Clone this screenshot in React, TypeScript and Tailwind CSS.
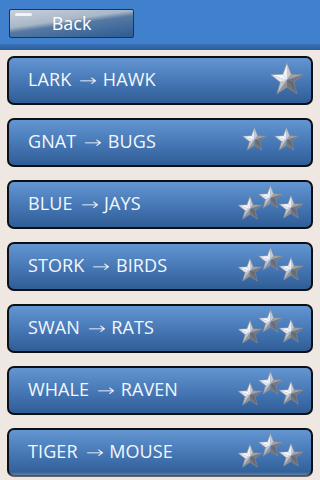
import type { FC } from "react";

type Star = { x: number; y: number; r: number };

const three: Star[] = [
  { x: 17, y: 27, r: 12.5 },
  { x: 37.5, y: 16, r: 12.5 },
  { x: 58, y: 26, r: 12.5 },
];

const rows: { from: string; to: string; stars: Star[] }[] = [
  { from: "LARK", to: "HAWK", stars: [{ x: 54, y: 22, r: 17 }] },
  {
    from: "GNAT",
    to: "BUGS",
    stars: [
      { x: 21.5, y: 20, r: 12.5 },
      { x: 53.5, y: 20, r: 12.5 },
    ],
  },
  { from: "BLUE", to: "JAYS", stars: three },
  { from: "STORK", to: "BIRDS", stars: three },
  { from: "SWAN", to: "RATS", stars: three },
  { from: "WHALE", to: "RAVEN", stars: three },
  { from: "TIGER", to: "MOUSE", stars: three },
];

const pt = (cx: number, cy: number, r: number, deg: number) => {
  const a = (deg * Math.PI) / 180;
  return `${(cx + r * Math.cos(a)).toFixed(2)},${(cy + r * Math.sin(a)).toFixed(2)}`;
};

const shade = (deg: number) => {
  // light from the upper left
  const d = ((deg + 140) * Math.PI) / 180;
  const t = 0.5 + 0.5 * Math.cos(d);
  const v = Math.round(105 + t * 145);
  return `rgb(${v},${v},${Math.min(255, v + 4)})`;
};

const SilverStar: FC<Star> = ({ x, y, r }) => {
  const inner = r * 0.42;
  const facets = [];
  for (let i = 0; i < 5; i++) {
    const a = -90 + i * 72;
    const o = pt(x, y, r, a);
    const l = pt(x, y, inner, a - 36);
    const rr = pt(x, y, inner, a + 36);
    const c = `${x},${y}`;
    facets.push(
      <polygon key={`${i}a`} points={`${c} ${l} ${o}`} fill={shade(a - 20)} />,
      <polygon key={`${i}b`} points={`${c} ${o} ${rr}`} fill={shade(a + 20)} />
    );
  }
  const outline = [];
  for (let i = 0; i < 10; i++) {
    outline.push(pt(x, y, i % 2 === 0 ? r : inner, -90 + i * 36));
  }
  return (
    <g>
      {facets}
      <polygon points={outline.join(" ")} fill="none" stroke="#8a8f96" strokeWidth={0.6} />
    </g>
  );
};

const Row: FC<{ from: string; to: string; stars: Star[] }> = ({ from, to, stars }) => (
  <div className="flex h-[49px] items-center justify-between rounded-[7px] border-2 border-[#0c0f14] bg-[linear-gradient(180deg,#6395d1_0%,#4a7cba_45%,#2f5d96_100%)] pr-[2px] pl-[19px]">
    <span className="mb-[3px] flex items-center text-[18px] leading-none tracking-[0.1px] text-[#f4f7fb]">
      <span>{from}</span>
      <span className="mt-[4px] mr-[8px] ml-[10px] inline-block scale-x-[1.35] font-['DejaVu_Sans'] text-[16px] font-extralight">
        →
      </span>
      <span>{to}</span>
    </span>
    <svg width="76" height="45" viewBox="0 0 76 45">
      {stars.map((s, i) => (
        <SilverStar key={i} {...s} />
      ))}
    </svg>
  </div>
);

export default function App() {
  return (
    <div
      className="relative h-[480px] w-[320px] overflow-hidden bg-[#efe8e2]"
      style={{ fontFamily: '"Open Sans", "Noto Sans", sans-serif' }}
    >
      <div className="h-[44px] bg-[#4080cc] pt-[9px] pl-[9px]">
        <button
          type="button"
          className="relative flex h-[29px] w-[125px] items-center justify-center overflow-hidden rounded-[2px] border border-[#1d3550] bg-[linear-gradient(172deg,#c9d1da_0%,#a9b7c7_40%,#5579a3_52%,#2d5b92_100%)] text-[18px] leading-none text-white"
        >
          <span className="absolute top-[3px] left-[5px] h-[3px] w-[17px] rounded-full bg-white/80" />
          <span className="relative mb-[2px]">Back</span>
        </button>
      </div>
      <div className="h-[6px] bg-[linear-gradient(180deg,#3a72b8_0%,#2c5d9e_100%)]" />
      <div className="flex flex-col gap-[13px] px-[7px] pt-[6px]">
        {rows.map((r) => (
          <Row key={r.from} from={r.from} to={r.to} stars={r.stars} />
        ))}
      </div>
      <div className="absolute right-0 bottom-0 left-0 h-[8px] bg-[linear-gradient(180deg,rgba(239,232,226,0)_0%,rgba(239,232,226,0.7)_100%)]" />
    </div>
  );
}
